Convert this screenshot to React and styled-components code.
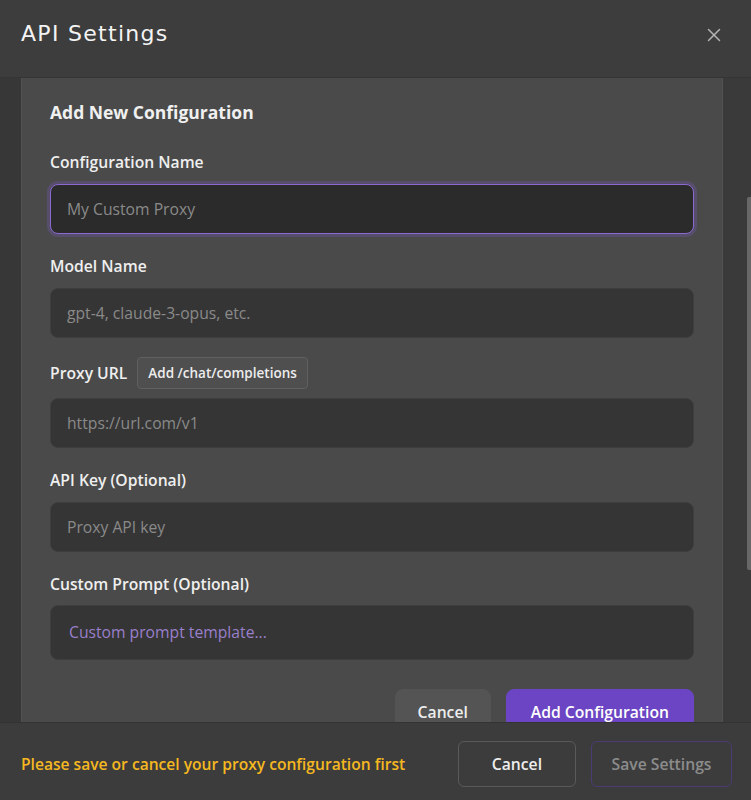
import React from "react";
import styled, { createGlobalStyle } from "styled-components";
import { X } from "lucide-react";

const Global = createGlobalStyle`
  html, body { margin: 0; padding: 0; background: #3c3c3c; }
  body { font-family: "Open Sans", "Noto Sans", sans-serif; color: #f2f2f2; }
  * { box-sizing: border-box; }
`;

const Modal = styled.div`
  display: flex;
  flex-direction: column;
  height: 800px;
  width: 751px;
  overflow: hidden;
  background: #3c3c3c;
`;

const Header = styled.header`
  height: 78px;
  flex: none;
  display: flex;
  align-items: center;
  justify-content: space-between;
  padding: 0 26px 11px 21px;
  background: #3d3d3d;
  border-bottom: 1px solid #353535;
`;

const Title = styled.h1`
  margin: 0;
  font-family: "DejaVu Sans", sans-serif;
  font-weight: 400;
  font-size: 22px;
  letter-spacing: 1.3px;
  color: #f4f4f4;
`;

const CloseButton = styled.button`
  border: 0;
  background: none;
  padding: 0;
  margin-top: 4px;
  color: #b4b4b4;
  display: flex;
  cursor: pointer;
`;

const Body = styled.div`
  position: relative;
  flex: 1;
  overflow: hidden;
  display: flex;
  background: #3a3a3a;
`;

const Gutter = styled.div`
  width: 21px;
  flex: none;
  background: #373737;
`;

const Card = styled.section`
  width: 702px;
  flex: none;
  background: #4a4a4a;
  border-left: 1px solid #525252;
  border-right: 1px solid #525252;
  padding: 21px 28px 40px 28px;
  display: flex;
  flex-direction: column;
  gap: 20px;
`;

const Thumb = styled.div`
  position: absolute;
  right: 0;
  top: 119px;
  width: 4px;
  height: 373px;
  border-radius: 2px 0 0 2px;
  background: #686868;
`;

const CardTitle = styled.h2`
  margin: 0 0 5px;
  font-size: 17.5px;
  font-weight: 700;
  line-height: 26px;
  color: #f0f0f0;
`;

const Field = styled.div`
  display: flex;
  flex-direction: column;
  gap: ${(p) => p.$gap || 10}px;
`;

const LabelRow = styled.div`
  display: flex;
  align-items: center;
  gap: 10px;
  margin-top: -1px;
`;

const Label = styled.label`
  font-size: 15.7px;
  font-weight: 600;
  line-height: 24px;
  color: #efefef;
`;

const SmallButton = styled.button`
  font-family: inherit;
  font-size: 13.5px;
  font-weight: 600;
  color: #ededed;
  background: #4f4f4f;
  border: 1px solid #606060;
  border-radius: 4px;
  height: 32px;
  padding: 0 10px;
`;

const Input = styled.input`
  height: 50px;
  width: 100%;
  font-family: inherit;
  font-size: 15.7px;
  color: #eee;
  padding: 0 16px;
  border-radius: 8px;
  outline: none;
  background: ${(p) => (p.$focus ? "#2b2b2b" : "#353535")};
  border: 1px solid ${(p) => (p.$focus ? "#8a6ad0" : "#3e3e3e")};
  box-shadow: ${(p) => (p.$focus ? "0 0 0 3px rgba(120, 90, 190, 0.28)" : "none")};
  &::placeholder { color: #8a8a8a; }
`;

const TextArea = styled.textarea`
  height: 55px;
  width: 100%;
  resize: none;
  font-family: inherit;
  font-size: 15.7px;
  line-height: 22px;
  padding: 15px 18px;
  border-radius: 8px;
  outline: none;
  color: #eee;
  background: #353535;
  border: 1px solid #3e3e3e;
  &::placeholder { color: #9a7fcb; }
`;

const Actions = styled.div`
  display: flex;
  justify-content: flex-end;
  gap: 15px;
  margin-top: 9px;
`;

const Button = styled.button`
  height: 46px;
  font-family: inherit;
  font-size: 15.7px;
  font-weight: 600;
  border-radius: ${(p) => p.$radius || 8}px;
  padding: 0 ${(p) => p.$pad || 24}px;
  cursor: pointer;
  color: ${(p) => (p.$variant === "primary" ? "#fff" : p.$variant === "disabled" ? "#8c8c8c" : "#eee")};
  background: ${(p) => (p.$variant === "primary" ? "#6b45c3" : p.$variant === "soft" ? "#545454" : "transparent")};
  border: 1px solid
    ${(p) =>
      p.$variant === "primary"
        ? "#6b45c3"
        : p.$variant === "soft"
        ? "#545454"
        : p.$variant === "disabled"
        ? "#4c3a74"
        : "#5a5a5a"};
`;

const Footer = styled.footer`
  height: 78px;
  flex: none;
  display: flex;
  align-items: center;
  justify-content: space-between;
  padding: 5px 19px 0 21px;
  background: #3c3c3c;
  border-top: 1px solid #333;
`;

const Warning = styled.span`
  font-size: 15.6px;
  font-weight: 600;
  color: #f5b820;
`;

const FooterActions = styled.div`
  display: flex;
  gap: 15px;
`;

export default function App() {
  return (
    <Modal>
      <Global />
      <Header>
        <Title>API Settings</Title>
        <CloseButton aria-label="Close">
          <X size={22} strokeWidth={1.6} />
        </CloseButton>
      </Header>
      <Body>
        <Gutter />
        <Card>
          <CardTitle>Add New Configuration</CardTitle>
          <Field>
            <Label>Configuration Name</Label>
            <Input $focus placeholder="My Custom Proxy" />
          </Field>
          <Field>
            <Label>Model Name</Label>
            <Input placeholder="gpt-4, claude-3-opus, etc." />
          </Field>
          <Field $gap={9}>
            <LabelRow>
              <Label>Proxy URL</Label>
              <SmallButton>Add /chat/completions</SmallButton>
            </LabelRow>
            <Input placeholder="https://url.com/v1" />
          </Field>
          <Field>
            <Label>API Key (Optional)</Label>
            <Input placeholder="Proxy API key" />
          </Field>
          <Field $gap={9}>
            <Label>Custom Prompt (Optional)</Label>
            <TextArea placeholder="Custom prompt template..." />
          </Field>
          <Actions>
            <Button $variant="soft" $pad={22}>Cancel</Button>
            <Button $variant="primary">Add Configuration</Button>
          </Actions>
        </Card>
        <Thumb />
      </Body>
      <Footer>
        <Warning>Please save or cancel your proxy configuration first</Warning>
        <FooterActions>
          <Button $radius={6} $pad={33}>Cancel</Button>
          <Button $radius={6} $pad={19.5} $variant="disabled">Save Settings</Button>
        </FooterActions>
      </Footer>
    </Modal>
  );
}
